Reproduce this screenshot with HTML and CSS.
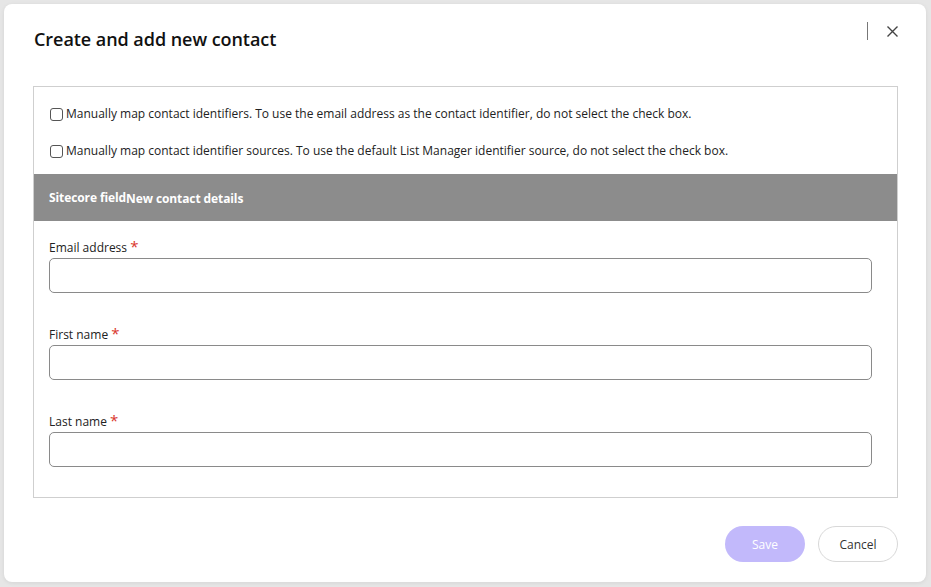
FILE: index.html
```html
<!DOCTYPE html>
<html lang="en">
<head>
<meta charset="utf-8">
<title>Create and add new contact</title>
<link rel="stylesheet" href="styles.css">
</head>
<body>
<div class="backdrop">
  <div class="modal">
    <header class="modal-header">
      <h1 class="modal-title">Create and add new contact</h1>
      <div class="header-actions">
        <span class="divider"></span>
        <button class="close-btn" aria-label="Close">
          <svg width="11" height="11" viewBox="0 0 11 11"><path d="M0.5 0.5L10.5 10.5M10.5 0.5L0.5 10.5" stroke="#444" stroke-width="1.4" fill="none"/></svg>
        </button>
      </div>
    </header>
    <section class="panel">
      <div class="options">
        <label class="check-row"><span class="checkbox"></span>Manually map contact identifiers. To use the email address as the contact identifier, do not select the check box.</label>
        <label class="check-row"><span class="checkbox"></span>Manually map contact identifier sources. To use the default List Manager identifier source, do not select the check box.</label>
      </div>
      <div class="table-head"><span>Sitecore field</span><span class="second">New contact details</span></div>
      <div class="fields">
        <div class="field">
          <label class="field-label">Email address <span class="req">*</span></label>
          <div class="input"></div>
        </div>
        <div class="field">
          <label class="field-label">First name <span class="req">*</span></label>
          <div class="input"></div>
        </div>
        <div class="field">
          <label class="field-label">Last name <span class="req">*</span></label>
          <div class="input"></div>
        </div>
      </div>
    </section>
    <footer class="modal-footer">
      <button class="btn btn-save">Save</button>
      <button class="btn btn-cancel">Cancel</button>
    </footer>
  </div>
</div>
</body>
</html>
```
FILE: styles.css
```css
* { box-sizing: border-box; }
html, body { margin: 0; padding: 0; }
body {
  width: 931px;
  height: 587px;
  overflow: hidden;
  background: #e6e6e6;
  font-family: "Open Sans", "Noto Sans", sans-serif;
  color: #222;
}
.backdrop {
  padding: 4px 5px 5px 4px;
  height: 587px;
}
.modal {
  background: #fff;
  border-radius: 8px;
  height: 578px;
  width: 922px;
  box-shadow: 0 1px 4px rgba(0,0,0,0.08);
  padding: 0 28px 0 29px;
  display: flex;
  flex-direction: column;
}
.modal-header {
  height: 82px;
  display: flex;
  justify-content: space-between;
  align-items: flex-start;
}
.modal-title {
  margin: 23px 0 0 1px;
  font-size: 18px;
  font-weight: 600;
  color: #111;
  letter-spacing: -0.05px;
  line-height: 24px;
}
.header-actions {
  display: flex;
  align-items: center;
  margin-top: 18px;
  margin-right: 0;
}
.divider {
  width: 1px;
  height: 18px;
  background: #777;
  margin-right: 19px;
}
.close-btn {
  border: 0;
  background: none;
  padding: 0;
  width: 11px;
  height: 11px;
  display: flex;
  margin-top: 1px;
}
.panel {
  border: 1px solid #cfcfcf;
  height: 412px;
  display: flex;
  flex-direction: column;
}
.options {
  padding: 18px 16px 0 16px;
  display: flex;
  flex-direction: column;
  gap: 19px;
  height: 87px;
}
.check-row {
  display: flex;
  align-items: center;
  font-size: 12px;
  color: #222;
  line-height: 18px;
}
.checkbox {
  width: 13px;
  height: 13px;
  border: 1px solid #555;
  border-radius: 3px;
  margin-right: 3px;
  flex: none;
}
.table-head {
  background: #8c8c8c;
  color: #fff;
  font-weight: 700;
  font-size: 12px;
  height: 47px;
  display: flex;
  align-items: center;
  padding-left: 15px;
  letter-spacing: -0.1px;
}
.table-head .second { position: relative; top: 1px; }
.fields {
  padding: 18px 25px 0 15px;
  display: flex;
  flex-direction: column;
  gap: 33px;
}
.field-label {
  display: block;
  font-size: 12px;
  color: #222;
  line-height: 18px;
  margin-bottom: 1px;
}
.req {
  color: #d9342b;
  font-size: 15px;
  line-height: 12px;
}
.input {
  height: 35px;
  border: 1px solid #8a8a8a;
  border-radius: 5px;
}
.modal-footer {
  display: flex;
  justify-content: flex-end;
  gap: 13px;
  margin-top: 28px;
}
.btn {
  height: 36px;
  width: 80px;
  border-radius: 18px;
  font-family: "Open Sans", sans-serif;
  font-size: 12px;
}
.btn-save {
  background: #c2b9fb;
  color: #fff;
  border: 0;
}
.btn-cancel {
  background: #fff;
  border: 1px solid #d8d8d8;
  color: #333;
}
```
